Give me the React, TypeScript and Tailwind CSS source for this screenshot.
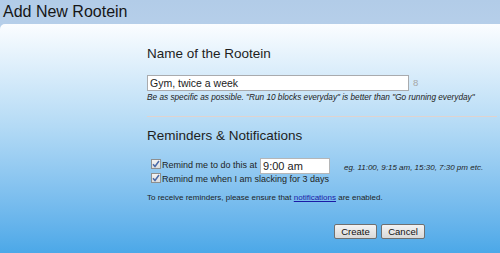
import React from "react";

function Check() {
  return (
    <span className="inline-flex items-center justify-center w-[10px] h-[10px] border border-[#8e8f8f] bg-linear-to-b from-[#f4f4f4] to-[#dedede] shrink-0">
      <svg width="8" height="8" viewBox="0 0 8 8">
        <path d="M1 4.2 L3 6.5 L7 1" fill="none" stroke="#4a6aa8" strokeWidth="1.5" />
      </svg>
    </span>
  );
}

export default function App() {
  return (
    <div className="w-[500px] h-[253px] overflow-hidden bg-linear-to-b from-[#b2cce8] to-[#d8e7f5] font-['Liberation_Sans',Arial,sans-serif] text-[#1e1e1e]">
      <div className="h-[24px] pl-[3px] text-[16px] leading-[24px] text-[#161616]">Add New Rootein</div>
      <div className="h-[229px] rounded-tl-[5px] bg-linear-to-b from-[#fbfdff] via-[#b3daf5] via-45% to-[#4ba8e8] pl-[147px] pt-[22px]">
        <div className="text-[13.5px] leading-[16px]">Name of the Rootein</div>
        <div className="mt-[13px] flex items-center">
          <div className="w-[262px] h-[16px] border border-[#a9abae] bg-white pl-[2px] text-[10.5px] leading-[14px] text-[#222]">
            Gym, twice a week
          </div>
          <span className="ml-[4px] text-[9.5px] text-[#a6a6a6]">8</span>
        </div>
        <div className="mt-[2px] text-[8.25px] leading-[10px] italic text-[#222]">
          Be as specific as possible. "Run 10 blocks everyday" is better than "Go running everyday"
        </div>
        <div className="mt-[13px] h-px bg-[#e0d3cf] mr-[3px]" />
        <div className="mt-[11px] text-[13.5px] leading-[16px]">Reminders &amp; Notifications</div>
        <div className="mt-[14px] flex items-center h-[16px] text-[9px]">
          <span className="ml-[4px]"><Check /></span>
          <span className="ml-[1px]">Remind me to do this at</span>
          <div className="ml-[3px] w-[70px] h-[16px] border border-[#b4b6b8] bg-white pl-[2px] text-[11px] leading-[14px] text-[#222]">
            9:00 am
          </div>
          <span className="ml-[14px] mt-[4px] text-[8px] italic">eg. 11:00, 9:15 am, 15:30, 7:30 pm etc.</span>
        </div>
        <div className="flex items-center h-[12px] text-[9px]">
          <span className="ml-[4px]"><Check /></span>
          <span className="ml-[1px]">Remind me when I am slacking for 3 days</span>
        </div>
        <div className="mt-[7px] text-[8px] leading-[10px]">
          To receive reminders, please ensure that{" "}
          <span className="text-[#1a1aa6] underline">notifications</span> are enabled.
        </div>
        <div className="mt-[21px] w-[278px] flex justify-end gap-[4px]">
          <button className="w-[43px] h-[15px] rounded-[2px] border border-[#707070] bg-linear-to-b from-[#f3f3f3] to-[#d9d9d9] text-[9.5px] leading-[13px] text-[#111]">
            Create
          </button>
          <button className="w-[44px] h-[15px] rounded-[2px] border border-[#707070] bg-linear-to-b from-[#f3f3f3] to-[#d9d9d9] text-[9.5px] leading-[13px] text-[#111]">
            Cancel
          </button>
        </div>
      </div>
    </div>
  );
}
